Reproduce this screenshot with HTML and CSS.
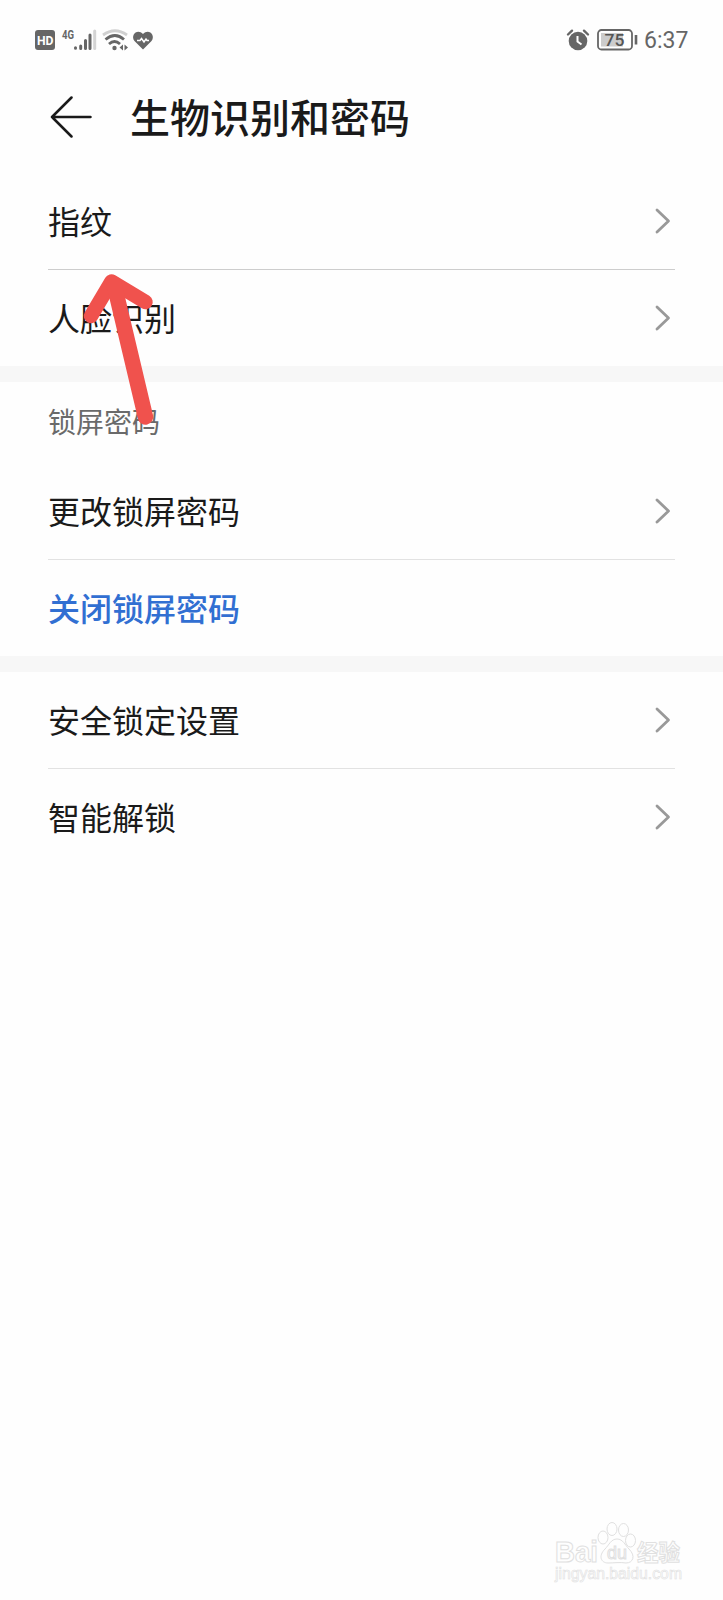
FILE: index.html
```html
<!DOCTYPE html>
<html lang="zh-CN">
<head>
    <meta charset="UTF-8">
    <meta name="viewport" content="width=device-width, initial-scale=1.0">
    <title>生物识别和密码</title>
    <link rel="stylesheet" href="styles.css">
</head>
<body>

<div class="status-bar">
    <svg class="status-icons" width="130" height="50" viewBox="20 15 130 50">
        <!-- HD -->
        <rect x="35" y="30" width="20" height="20" rx="3" fill="#666"/>
        <text class="hd" x="37" y="44.5" textLength="16.5" lengthAdjust="spacingAndGlyphs">HD</text>
        <!-- sinal -->
        <text class="net" x="62" y="38.5" textLength="12" lengthAdjust="spacingAndGlyphs">4G</text>
        <g stroke-width="3" stroke-linecap="round">
            <path d="M75.5 47.7v.6M80.7 46v2.5M85.5 40.5v8M90 35v13.5" stroke="#666"/>
            <path d="M94.7 31v17.5" stroke="#d4d4d4"/>
        </g>
        <!-- wifi -->
        <g fill="none" stroke-width="2.8">
            <path d="M103 35Q115 26.500 127 35" stroke="#d0d0d0"/>
            <path d="M105.500 39.500Q115 31.500 124 39.500" stroke="#666"/>
            <path d="M109 44Q114.500 39 120 44" stroke="#666"/>
        </g>
        <circle cx="114.500" cy="48" r="2.200" fill="#666"/>
        <path d="M123 44.500v6l-3.500-3zM124.500 44.500v6l3.500-3z" fill="#666"/>
        <!-- saude -->
        <path d="M143 49.500L134.500 41C130 35 137.500 28 143 34C148.500 28 156 35 151.500 41Z" fill="#666"/>
        <path d="M137 40.500h3l1.500-2 2.500 3.500 2-3 1 1.500h2" fill="none" stroke="#fff" stroke-width="1.500"/>
    </svg>
    <div class="status-right">
        <svg width="74" height="50" viewBox="565 15 74 50">
            <!-- alarme -->
            <circle cx="578" cy="41" r="9.300" fill="#666"/>
            <path d="M577.500 36v5.500l4 3" fill="none" stroke="#fff" stroke-width="2"/>
            <path d="M568 34.500l4-3.800M588 34.500l-4-3.800" stroke="#666" stroke-width="2.400" stroke-linecap="round"/>
            <!-- bateria -->
            <rect x="598" y="30" width="34" height="19.500" rx="3.500" fill="#fff" stroke="#666" stroke-width="1.800"/>
            <rect x="601" y="33" width="22" height="13.500" fill="#ccc"/>
            <text class="battery" x="604.500" y="46" textLength="20" lengthAdjust="spacingAndGlyphs">75</text>
            <path d="M636 35v9.500" stroke="#666" stroke-width="2.600"/>
        </svg>
        <span class="clock">6:37</span>
    </div>
</div>

<header class="header">
    <svg width="42" height="42" viewBox="0 0 42 42">
        <path d="M21.500 1.500L2 21l19.500 19.500M2 21h38.500" fill="none" stroke="#1a1a1a" stroke-width="2.500" stroke-linecap="round" stroke-linejoin="round"/>
    </svg>
    <h1 class="title">生物识别和密码</h1>
</header>

<main>
    <section class="group">
        <div class="item line strong">
            <span>指纹</span>
            <svg class="chevron" viewBox="0 0 16 26"><path d="M2 2l11.500 11L2 24"/></svg>
        </div>
        <div class="item">
            <span>人脸识别</span>
            <svg class="chevron" viewBox="0 0 16 26"><path d="M2 2l11.500 11L2 24"/></svg>
        </div>
    </section>

    <section class="group">
        <h2 class="subtitle">锁屏密码</h2>
        <div class="item line">
            <span>更改锁屏密码</span>
            <svg class="chevron" viewBox="0 0 16 26"><path d="M2 2l11.500 11L2 24"/></svg>
        </div>
        <div class="item link">
            <span>关闭锁屏密码</span>
        </div>
    </section>

    <section class="group">
        <div class="item line">
            <span>安全锁定设置</span>
            <svg class="chevron" viewBox="0 0 16 26"><path d="M2 2l11.500 11L2 24"/></svg>
        </div>
        <div class="item">
            <span>智能解锁</span>
            <svg class="chevron" viewBox="0 0 16 26"><path d="M2 2l11.500 11L2 24"/></svg>
        </div>
    </section>
</main>

<!-- seta vermelha -->
<svg class="arrow" width="80" height="160" viewBox="80 270 80 160">
    <path d="M91 316L111.500 281.500L145.500 302" stroke-width="14.500"/>
    <path d="M114 284L145.500 417" stroke-width="15.500"/>
</svg>

<!-- marca d'agua -->
<svg class="watermark" width="140" height="70" viewBox="548 1515 140 70">
    <text class="wm-logo" x="555" y="1562" textLength="43" lengthAdjust="spacingAndGlyphs">Bai</text>
    <g class="paw">
        <ellipse cx="603" cy="1537.500" rx="5" ry="6.500"/>
        <ellipse cx="612" cy="1529" rx="5" ry="6.500"/>
        <ellipse cx="623.500" cy="1530" rx="5" ry="6.500"/>
        <ellipse cx="630.500" cy="1540.500" rx="5" ry="6.500"/>
        <path d="M617 1539C611 1539 609 1545 605 1549C598 1556 601 1563 608 1563C613 1563 621 1562 626 1563C633 1563 636 1556 629 1549C625 1545 623 1539 617 1539Z"/>
    </g>
    <text class="wm-du" x="607" y="1559" textLength="20" lengthAdjust="spacingAndGlyphs">du</text>
    <text class="wm-cn" x="637" y="1560.500" textLength="43" lengthAdjust="spacingAndGlyphs">经验</text>
    <text class="wm-url" x="555" y="1579" textLength="127" lengthAdjust="spacingAndGlyphs">jingyan.baidu.com</text>
</svg>

</body>
</html>
```

FILE: styles.css
```css
body{
    margin: 0;
    min-height: 1600px;
    position: relative;
    font-family: Roboto, "Noto Sans CJK SC", sans-serif;
    background-color: #fefefe;
    color: #1a1a1a;
}

.status-bar{
    display: flex;
    justify-content: space-between;
    height: 63px;
    box-sizing: border-box;
    padding: 15px 35px 0 20px;
}

.status-icons{
    overflow: visible;
}

.status-right{
    display: flex;
    gap: 5px;
}

.hd, .net{
    font-family: Roboto, sans-serif;
    font-weight: 700;
    font-size: 12.5px;
    fill: white;
}

.net{
    fill: #666;
}

.battery{
    font-family: Roboto, sans-serif;
    font-weight: 500;
    font-size: 17px;
    fill: #555;
}

.clock{
    color: #666;
    font-size: 23px;
    line-height: 52px;
    width: 44px;
    white-space: nowrap;
}

.header{
    display: flex;
    align-items: center;
    gap: 38px;
    height: 110px;
    box-sizing: border-box;
    padding: 0 50px 3px;
}

.title{
    margin: 0;
    padding-top: 7px;
    font-size: 40px;
    font-weight: 500;
    line-height: 58px;
}

.group + .group{
    border-top: 16px solid #f7f7f7;
}

.item{
    display: flex;
    align-items: center;
    justify-content: space-between;
    height: 96px;
    margin: 0 48px;
    padding-right: 4px;
    font-size: 32px;
}

.item span{
    padding-bottom: 3px;
}

.line{
    border-bottom: 1px solid #e2e2e2;
}

.strong{
    border-color: #cdcdcd;
}

.chevron{
    width: 16px;
    height: 26px;
    fill: none;
    stroke: #999;
    stroke-width: 2.8;
    stroke-linecap: round;
    stroke-linejoin: round;
}

.subtitle{
    margin: 0;
    padding-left: 48px;
    height: 81px;
    line-height: 84px;
    font-size: 28px;
    font-weight: 400;
    color: #6a6a6a;
}

.link{
    color: #316fd2;
    font-weight: 500;
}

.arrow{
    position: absolute;
    left: 80px;
    top: 270px;
    fill: none;
    stroke: #f0524d;
    stroke-linecap: round;
    stroke-linejoin: round;
}

.watermark{
    position: absolute;
    left: 548px;
    top: 1515px;
    fill: #fefefe;
    stroke: #e0e0e0;
    stroke-width: 1;
    font-family: "Liberation Sans", "Noto Sans CJK SC", sans-serif;
}

.wm-logo{
    font-size: 29px;
    font-weight: 700;
}

.wm-du{
    font-size: 18px;
}

.wm-cn{
    font-size: 23px;
    font-weight: 700;
}

.wm-url{
    font-size: 16px;
    stroke-width: .6;
}
```
